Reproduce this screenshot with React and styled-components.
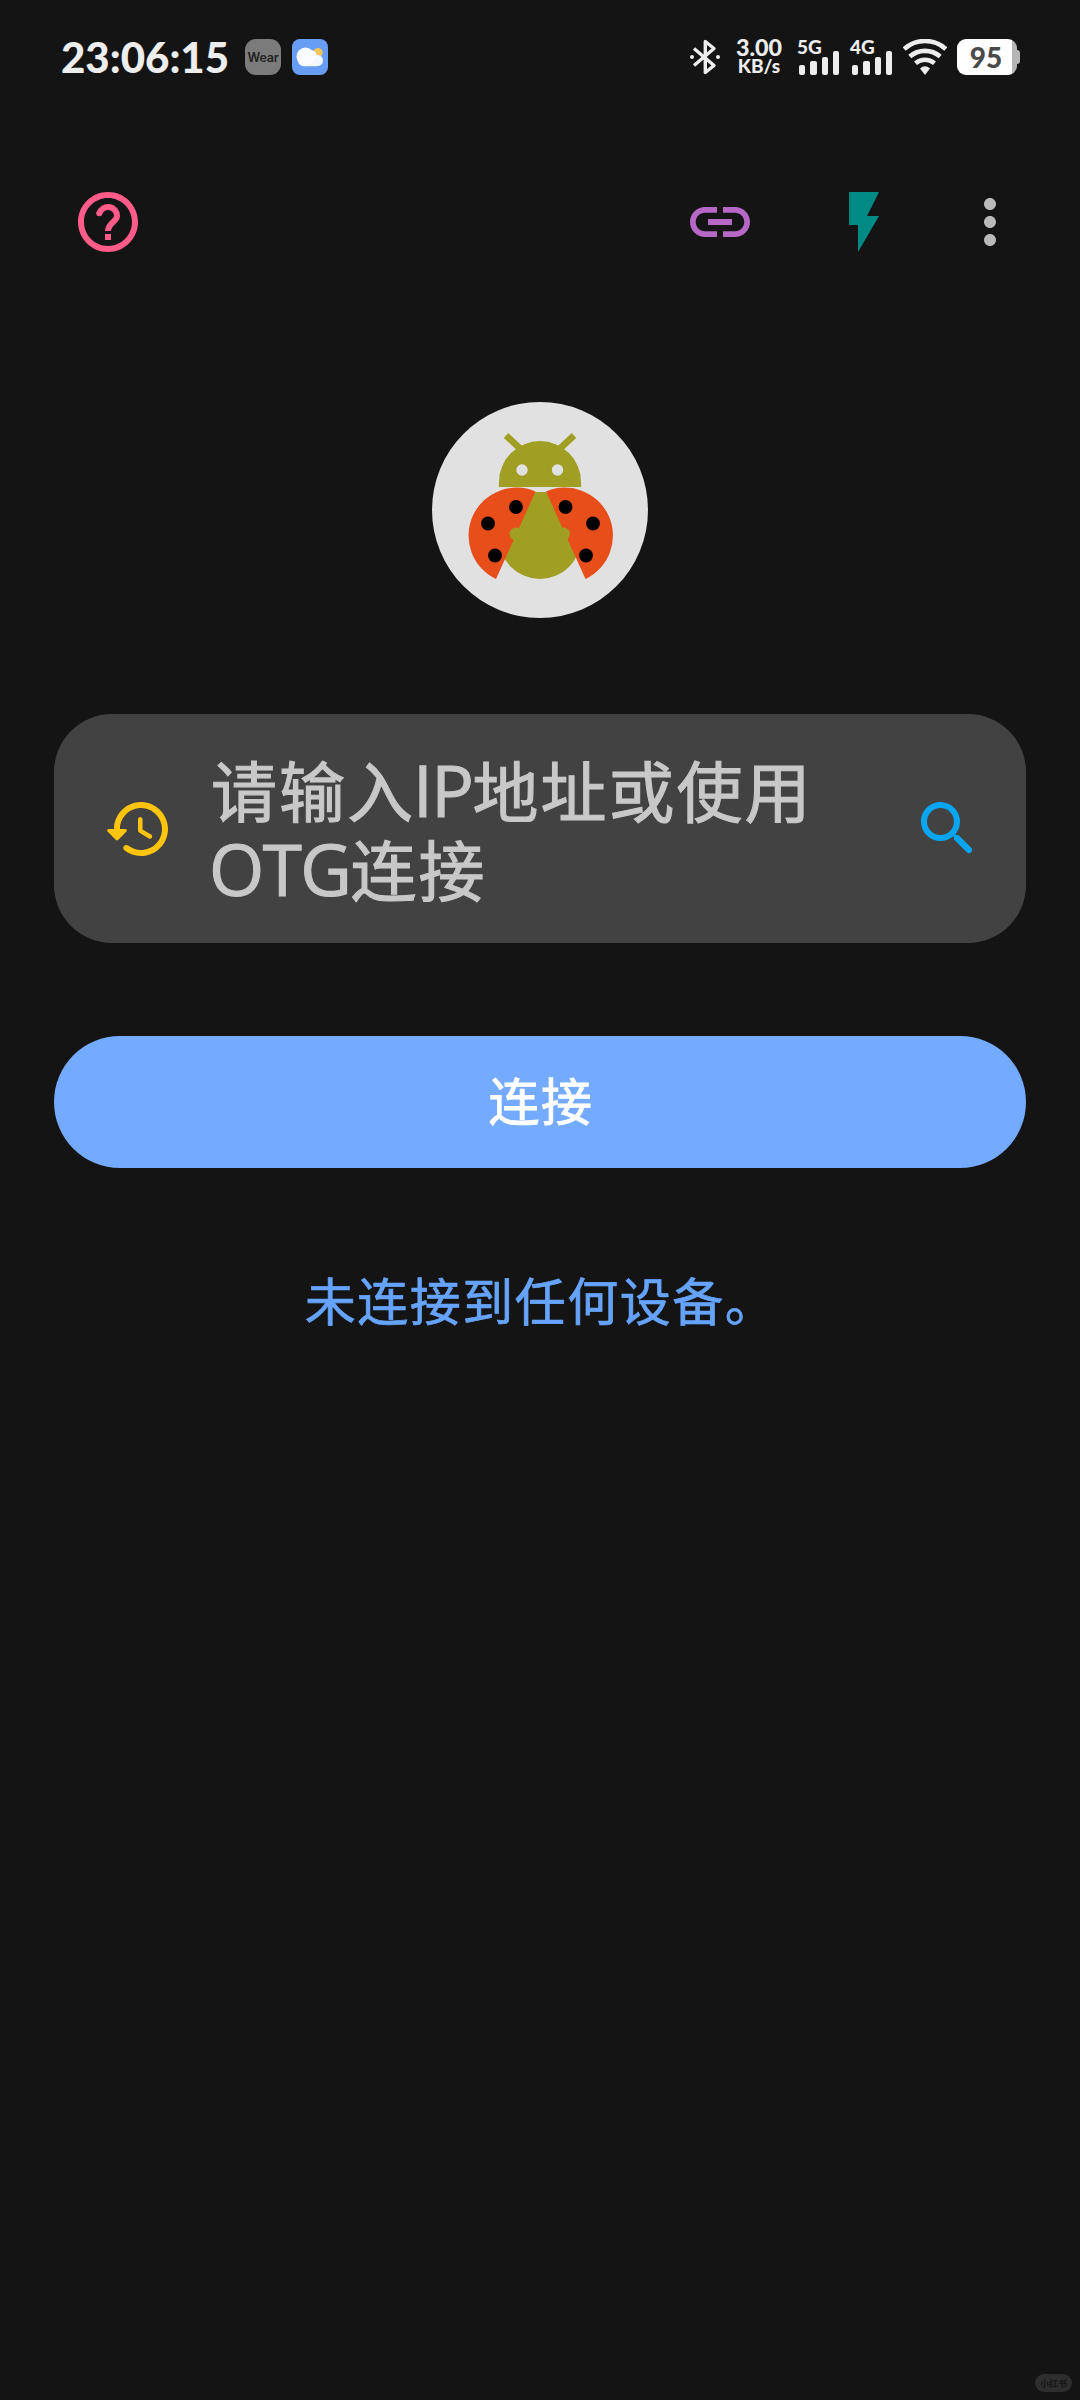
import React from 'react'
import styled, { createGlobalStyle } from 'styled-components'

const GlobalStyle = createGlobalStyle`
    * {
        box-sizing: border-box;
    }
    body {
        margin: 0;
        background: #141414;
        font-family: 'Open Sans', 'Noto Sans CJK SC', sans-serif;
    }
    svg {
        display: block;
        flex: none;
    }
`

const Screen = styled.div`
    display: flex;
    flex-direction: column;
    width: 1080px;
    height: 2400px;
    background: #141414;
    overflow: hidden;
`

const StatusBar = styled.header`
    display: flex;
    align-items: center;
    justify-content: space-between;
    height: 114px;
    padding: 0 60px 0 61px;
    color: #ededed;
    font-family: Lato, 'Open Sans', sans-serif;
    font-weight: 900;
`
const StatusGroup = styled.div`
    display: flex;
    align-items: center;
    height: 36px;
`
const Clock = styled.span`
    width: 184px;
    font-size: 42px;
    line-height: 36px;
    white-space: nowrap;
`
const AppBadge = styled.div`
    display: flex;
    align-items: center;
    justify-content: center;
    width: 36px;
    height: 36px;
    margin-right: 11px;
    border-radius: ${props => props.radius || '8px'};
    background: ${props => props.bg};
    color: #222;
    font-family: Inter, sans-serif;
    font-size: 12.5px;
    font-weight: 600;
    letter-spacing: -0.2px;
`
const NetSpeed = styled.div`
    display: flex;
    flex-direction: column;
    align-items: center;
    width: 48px;
    margin: 0 14px 0 15px;
    font-size: 23.3px;
    line-height: 18px;
    & small {
        font-size: 19px;
        line-height: 20px;
    }
`
const Signal = styled.div`
    position: relative;
    display: flex;
    align-items: flex-end;
    gap: 5px;
    width: 43px;
    height: 36px;
    padding-left: 2px;
    margin-right: 10px;
    & span {
        position: absolute;
        top: 0;
        left: 0;
        font-size: 19px;
        line-height: 15px;
    }
`
const Bar = styled.i`
    width: 6.3px;
    height: ${props => props.h}px;
    border-radius: 2px;
    background: #ededed;
`
const Battery = styled.div`
    display: flex;
    align-items: center;
    margin-left: 10px;
`
const BatteryBody = styled.div`
    width: 60px;
    height: 36px;
    border-radius: 9px;
    background: linear-gradient(90deg, #fff 55px, #b5b5b5 55px);
    color: #4a4a4a;
    font-size: 28px;
    line-height: 36px;
    text-align: center;
    padding-right: 2px;
`
const BatteryTip = styled.div`
    width: 3px;
    height: 14px;
    border-radius: 0 3px 3px 0;
    background: #b5b5b5;
`

const Toolbar = styled.nav`
    display: flex;
    align-items: center;
    height: 216px;
    padding: 0 54px 0 72px;
`
const Spacer = styled.div`
    flex: 1;
`
const ToolButton = styled.button`
    width: 72px;
    height: 72px;
    padding: 0;
    margin-left: ${props => props.left || '0'};
    border: 0;
    background: none;
    color: ${props => props.color};
`

const Logo = styled.div`
    width: 216px;
    height: 216px;
    margin: 72px auto 96px;
`

const Content = styled.main`
    display: flex;
    flex-direction: column;
    padding: 0 54px;
`
const AddressField = styled.div`
    display: flex;
    align-items: center;
    height: 229px;
    padding: 0 42px 0 48px;
    border-radius: 58px;
    background: #424242;
`
const Placeholder = styled.p`
    flex: 1;
    margin: 0 0 0 37px;
    padding-top: 5px;
    color: #c8c8c8;
    font-size: 66px;
    line-height: 79.5px;
    letter-spacing: 2px;
    white-space: nowrap;
    -webkit-text-stroke: 1.1px #c8c8c8;
    & span {
        margin-left: -2px;
        font-size: 71px;
        line-height: 1;
        letter-spacing: -1.5px;
    }
`
const ConnectButton = styled.button`
    height: 132px;
    margin-top: 93px;
    padding: 0 0 6px 2px;
    border: 0;
    border-radius: 66px;
    background: #74aaff;
    color: #fff;
    font-family: inherit;
    font-size: 51px;
    letter-spacing: 1.5px;
    -webkit-text-stroke: 0.9px #fff;
`
const DeviceState = styled.p`
    margin: 93px 0 0;
    padding-left: 2px;
    color: #66a3fb;
    font-size: 51px;
    line-height: 80px;
    letter-spacing: 1.5px;
    text-align: center;
    -webkit-text-stroke: 0.7px #66a3fb;
`

const Watermark = styled.footer`
    display: flex;
    align-items: center;
    justify-content: center;
    width: 37px;
    height: 18px;
    margin: auto 8px 8px auto;
    border-radius: 9px;
    background: #2e2e2e;
    color: #151515;
    font-size: 9px;
    font-weight: 700;
`

const Icon = ({ d, size = 72 }) => (
    <svg width={size} height={size} viewBox="0 0 24 24" fill="currentColor">
        <path d={d} />
    </svg>
)

const icons = {
    help: 'M11 18h2v-2h-2v2zm1-16C6.48 2 2 6.48 2 12s4.48 10 10 10 10-4.48 10-10S17.52 2 12 2zm0 18c-4.41 0-8-3.59-8-8s3.59-8 8-8 8 3.59 8 8-3.59 8-8 8z',
    link: 'M3.9 12c0-1.71 1.39-3.1 3.1-3.1h4V7H7c-2.76 0-5 2.24-5 5s2.24 5 5 5h4v-1.9H7c-1.71 0-3.1-1.39-3.1-3.1zM8 13h8v-2H8v2zm9-6h-4v1.9h4c1.71 0 3.1 1.39 3.1 3.1s-1.39 3.1-3.1 3.1h-4V17h4c2.76 0 5-2.24 5-5s-2.24-5-5-5z',
    flash: 'M7 2v11h3v9l7-12h-4l4-8z',
    more: 'M12 8c1.1 0 2-.9 2-2s-.9-2-2-2-2 .9-2 2 .9 2 2 2zm0 2c-1.1 0-2 .9-2 2s.9 2 2 2 2-.9 2-2-.9-2-2-2zm0 6c-1.1 0-2 .9-2 2s.9 2 2 2 2-.9 2-2-.9-2-2-2z',
    history: 'M13.26 3C8.17 2.86 4 6.95 4 12H2.21c-.45 0-.67.54-.35.85l2.79 2.8c.2.2.51.2.71 0l2.79-2.8c.31-.31.09-.85-.36-.85H6c0-3.9 3.18-7.05 7.1-7 3.72.05 6.85 3.18 6.9 6.9.05 3.91-3.1 7.1-7 7.1-1.61 0-3.1-.55-4.28-1.48-.4-.31-.96-.28-1.32.08-.42.43-.39 1.13.08 1.5 1.52 1.19 3.44 1.9 5.52 1.9 5.05 0 9.14-4.17 9-9.26-.13-4.69-4.05-8.61-8.74-8.74zm-.51 5c-.41 0-.75.34-.75.75v3.68c0 .35.19.68.49.86l3.12 1.85c.36.21.82.09 1.03-.26.21-.36.09-.82-.26-1.03l-2.88-1.71v-3.4c0-.4-.34-.74-.75-.74z',
    search: 'M15.5 14h-.79l-.28-.27c1.2-1.4 1.82-3.31 1.48-5.34-.47-2.78-2.79-5-5.59-5.34-4.23-.52-7.79 3.04-7.27 7.27.34 2.8 2.56 5.12 5.34 5.59 2.03.34 3.94-.28 5.34-1.48l.27.28v.79l4.25 4.25c.41.41 1.08.41 1.49 0 .41-.41.41-1.08 0-1.49L15.5 14zm-6 0C7.01 14 5 11.99 5 9.5S7.01 5 9.5 5 14 7.01 14 9.5 11.99 14 9.5 14z',
}

const HelpIcon = () => (
    <svg width="72" height="72" viewBox="0 0 24 24">
        <path d={icons.help} fill="currentColor" />
        <path d="M9.1 9.2A3 3 0 0 1 15 10c0 1.9-3 2.2-3 5" fill="none" stroke="currentColor" strokeWidth="2" />
        <circle cx="9.1" cy="9.1" r="1" fill="currentColor" />
    </svg>
)

const WeatherIcon = () => (
    <svg width="36" height="36" viewBox="0 0 36 36">
        <circle cx="26" cy="13.5" r="4.6" fill="#f3c75a" />
        <circle cx="25.5" cy="21.5" r="5.6" fill="#e6efff" />
        <rect x="6" y="16" width="24" height="11.2" rx="5.6" fill="#f2f6ff" />
        <circle cx="13.5" cy="17.6" r="9" fill="#fbfcff" />
        <circle cx="19" cy="16.5" r="5.5" fill="#fbfcff" />
    </svg>
)

const BluetoothIcon = () => (
    <svg width="30" height="36" viewBox="0 0 30 36" fill="none" stroke="#ededed" strokeWidth="3.4">
        <path d="M4 9.5 24 26.5 15.3 33.5V2.5L24 9.5 4 26.5" strokeLinejoin="round" />
        <circle cx="2" cy="18" r="2" fill="#ededed" stroke="none" />
        <circle cx="28" cy="18" r="2" fill="#ededed" stroke="none" />
    </svg>
)

const WifiIcon = () => (
    <svg width="44" height="36" viewBox="0 0 44 36" fill="none" stroke="#ededed" strokeWidth="4.6">
        <path d="M1.2 10A31 31 0 0 1 42.8 10" />
        <path d="M6.8 17.6A23 23 0 0 1 37.2 17.6" />
        <path d="M12.5 24.2A15 15 0 0 1 31.5 24.2" />
        <path d="M17 29.5Q22 25 27 29.5L22 36z" fill="#ededed" stroke="none" />
    </svg>
)

const spots = [[84, 105], [56, 121.5], [63, 153.5], [133.5, 105], [161, 121.5], [154, 153.5]]

const LadybugLogo = () => (
    <svg width="216" height="216" viewBox="0 0 216 216">
        <circle cx="108" cy="108" r="108" fill="#e1e1e1" />
        <g fill="#a09f24">
            <path d="M67 85v-5a41 41 0 0 1 82 0v5z" />
            <path d="M74 33.5 88 46.5M142 33.5 128 46.5" stroke="#a09f24" strokeWidth="6.5" />
            <path d="M103 90h11l35 46a41 41 0 0 1-82 0z" />
        </g>
        <circle cx="90" cy="68" r="5.7" fill="#e1e1e1" />
        <circle cx="125.5" cy="68" r="5.7" fill="#e1e1e1" />
        <path d="M103.5 89.5A48.01 48.01 0 0 0 64 177z" fill="#e74e1a" />
        <path d="M114 89.5A48.01 48.01 0 0 1 153.5 177z" fill="#e74e1a" />
        <circle cx="84" cy="132" r="6.5" fill="#a09f24" />
        <circle cx="131.5" cy="132" r="6.5" fill="#a09f24" />
        {spots.map(([x, y]) => (
            <circle key={`${x}-${y}`} cx={x} cy={y} r="6.9" fill="#000" />
        ))}
    </svg>
)

const SignalBars = ({ label }) => (
    <Signal>
        <span>{label}</span>
        {[10, 14, 18.5, 24.5].map(h => <Bar key={h} h={h} />)}
    </Signal>
)

const App = () => {
    return (
        <Screen>
            <GlobalStyle />
            <StatusBar>
                <StatusGroup>
                    <Clock>23:06:15</Clock>
                    <AppBadge bg="#7b7b7b" radius="11px">Wear</AppBadge>
                    <AppBadge bg="#679df3"><WeatherIcon /></AppBadge>
                </StatusGroup>
                <StatusGroup>
                    <BluetoothIcon />
                    <NetSpeed>3.00<small>KB/s</small></NetSpeed>
                    <SignalBars label="5G" />
                    <SignalBars label="4G" />
                    <WifiIcon />
                    <Battery>
                        <BatteryBody>95</BatteryBody>
                        <BatteryTip />
                    </Battery>
                </StatusGroup>
            </StatusBar>
            <Toolbar>
                <ToolButton color="#ff5c8a"><HelpIcon /></ToolButton>
                <Spacer />
                <ToolButton color="#b767c6"><Icon d={icons.link} /></ToolButton>
                <ToolButton color="#008a85" left="72px"><Icon d={icons.flash} /></ToolButton>
                <ToolButton color="#bababa" left="54px"><Icon d={icons.more} /></ToolButton>
            </Toolbar>
            <Logo>
                <LadybugLogo />
            </Logo>
            <Content>
                <AddressField>
                    <ToolButton color="#ffc40d"><Icon d={icons.history} /></ToolButton>
                    <Placeholder>
                        请输入<span>IP</span>地址或使用<br />
                        <span>OTG</span>连接
                    </Placeholder>
                    <ToolButton color="#0aa5f0"><Icon d={icons.search} /></ToolButton>
                </AddressField>
                <ConnectButton>连接</ConnectButton>
                <DeviceState>未连接到任何设备。</DeviceState>
            </Content>
            <Watermark>小红书</Watermark>
        </Screen>
    )
}

export default App
